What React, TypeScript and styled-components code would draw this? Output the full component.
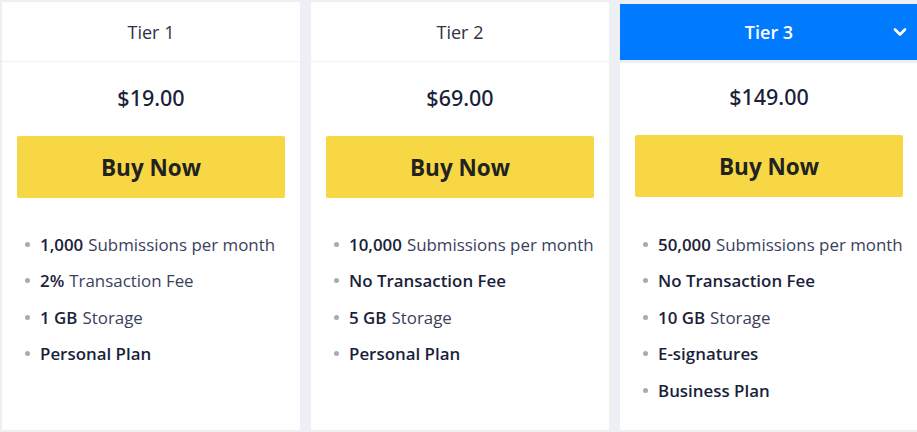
import React from "react";
import styled, { createGlobalStyle } from "styled-components";

const Global = createGlobalStyle`
  html, body { margin: 0; padding: 0; background: #eeeff4; }
  body { font-family: "Open Sans", "Noto Sans", sans-serif; overflow: hidden; }
  * { box-sizing: border-box; }
`;

const Page = styled.div`
  width: 917px;
  height: 432px;
  overflow: hidden;
  padding: 2px 0 2px 2px;
`;

const Row = styled.div`
  display: grid;
  grid-template-columns: repeat(3, 298px);
  column-gap: 11px;
  height: 428px;
`;

const Card = styled.div<{ $active?: boolean }>`
  display: flex;
  flex-direction: column;
  gap: ${(p) => (p.$active ? "3px" : "0")};
  padding-top: ${(p) => (p.$active ? "2px" : "0")};
`;

const Header = styled.div<{ $active?: boolean }>`
  height: ${(p) => (p.$active ? "56px" : "60px")};
  display: flex;
  align-items: center;
  justify-content: center;
  position: relative;
  background: ${(p) => (p.$active ? "#007bff" : "#fff")};
  color: ${(p) => (p.$active ? "#fff" : "#2c3345")};
  border-bottom: ${(p) => (p.$active ? "none" : "1px dotted #e6e7ec")};
  font-size: 18px;
  font-weight: ${(p) => (p.$active ? 600 : 500)};
`;

const Chevron = styled.svg`
  position: absolute;
  right: 11px;
  top: 50%;
  margin-top: -6px;
`;

const Body = styled.div<{ $active?: boolean }>`
  flex: 1;
  background: #fff;
  padding: ${(p) => (p.$active ? "20px" : "22px")} 15px 0;
  display: flex;
  flex-direction: column;
`;

const Price = styled.div`
  font-family: "Noto Sans", sans-serif;
  font-size: 21.5px;
  font-weight: 500;
  color: #1b1f3b;
  text-align: center;
  line-height: 28px;
`;

const BuyButton = styled.button`
  margin-top: 24px;
  height: 62px;
  border: none;
  border-radius: 2px;
  background: #f7d744;
  color: #222;
  font-family: "Open Sans", sans-serif;
  font-size: 22.5px;
  font-weight: 700;
  cursor: pointer;
`;

const Features = styled.ul<{ $active?: boolean }>`
  list-style: none;
  margin: ${(p) => (p.$active ? "29px" : "28px")} 0 0;
  padding: 0 0 0 8px;
  display: flex;
  flex-direction: column;
`;

const Feature = styled.li`
  display: flex;
  align-items: center;
  height: 36.5px;
  font-size: 16.9px;
  color: #3a3f5c;
  white-space: nowrap;
  &::before {
    content: "";
    width: 5px;
    height: 5px;
    border-radius: 50%;
    background: #a9abb3;
    margin-right: 10px;
    flex: none;
  }
  b {
    font-weight: 600;
    color: #1b1f3b;
    margin-right: 5px;
  }
`;

type Item = { bold: string; rest?: string };
type Tier = { name: string; price: string; items: Item[]; active?: boolean };

const tiers: Tier[] = [
  {
    name: "Tier 1",
    price: "$19.00",
    items: [
      { bold: "1,000", rest: "Submissions per month" },
      { bold: "2%", rest: "Transaction Fee" },
      { bold: "1 GB", rest: "Storage" },
      { bold: "Personal Plan" },
    ],
  },
  {
    name: "Tier 2",
    price: "$69.00",
    items: [
      { bold: "10,000", rest: "Submissions per month" },
      { bold: "No Transaction Fee" },
      { bold: "5 GB", rest: "Storage" },
      { bold: "Personal Plan" },
    ],
  },
  {
    name: "Tier 3",
    price: "$149.00",
    active: true,
    items: [
      { bold: "50,000", rest: "Submissions per month" },
      { bold: "No Transaction Fee" },
      { bold: "10 GB", rest: "Storage" },
      { bold: "E-signatures" },
      { bold: "Business Plan" },
    ],
  },
];

export default function App() {
  return (
    <>
      <Global />
      <Page>
        <Row>
          {tiers.map((t) => (
            <Card key={t.name} $active={t.active}>
              <Header $active={t.active}>
                {t.name}
                {t.active && (
                  <Chevron width="14" height="12" viewBox="0 0 14 12" fill="none">
                    <path d="M2 3.5 L7 8.5 L12 3.5" stroke="#fff" strokeWidth="2.6" strokeLinecap="round" strokeLinejoin="round" />
                  </Chevron>
                )}
              </Header>
              <Body $active={t.active}>
                <Price>{t.price}</Price>
                <BuyButton>Buy Now</BuyButton>
                <Features $active={t.active}>
                  {t.items.map((it) => (
                    <Feature key={it.bold}>
                      <b>{it.bold}</b>
                      {it.rest}
                    </Feature>
                  ))}
                </Features>
              </Body>
            </Card>
          ))}
        </Row>
      </Page>
    </>
  );
}
